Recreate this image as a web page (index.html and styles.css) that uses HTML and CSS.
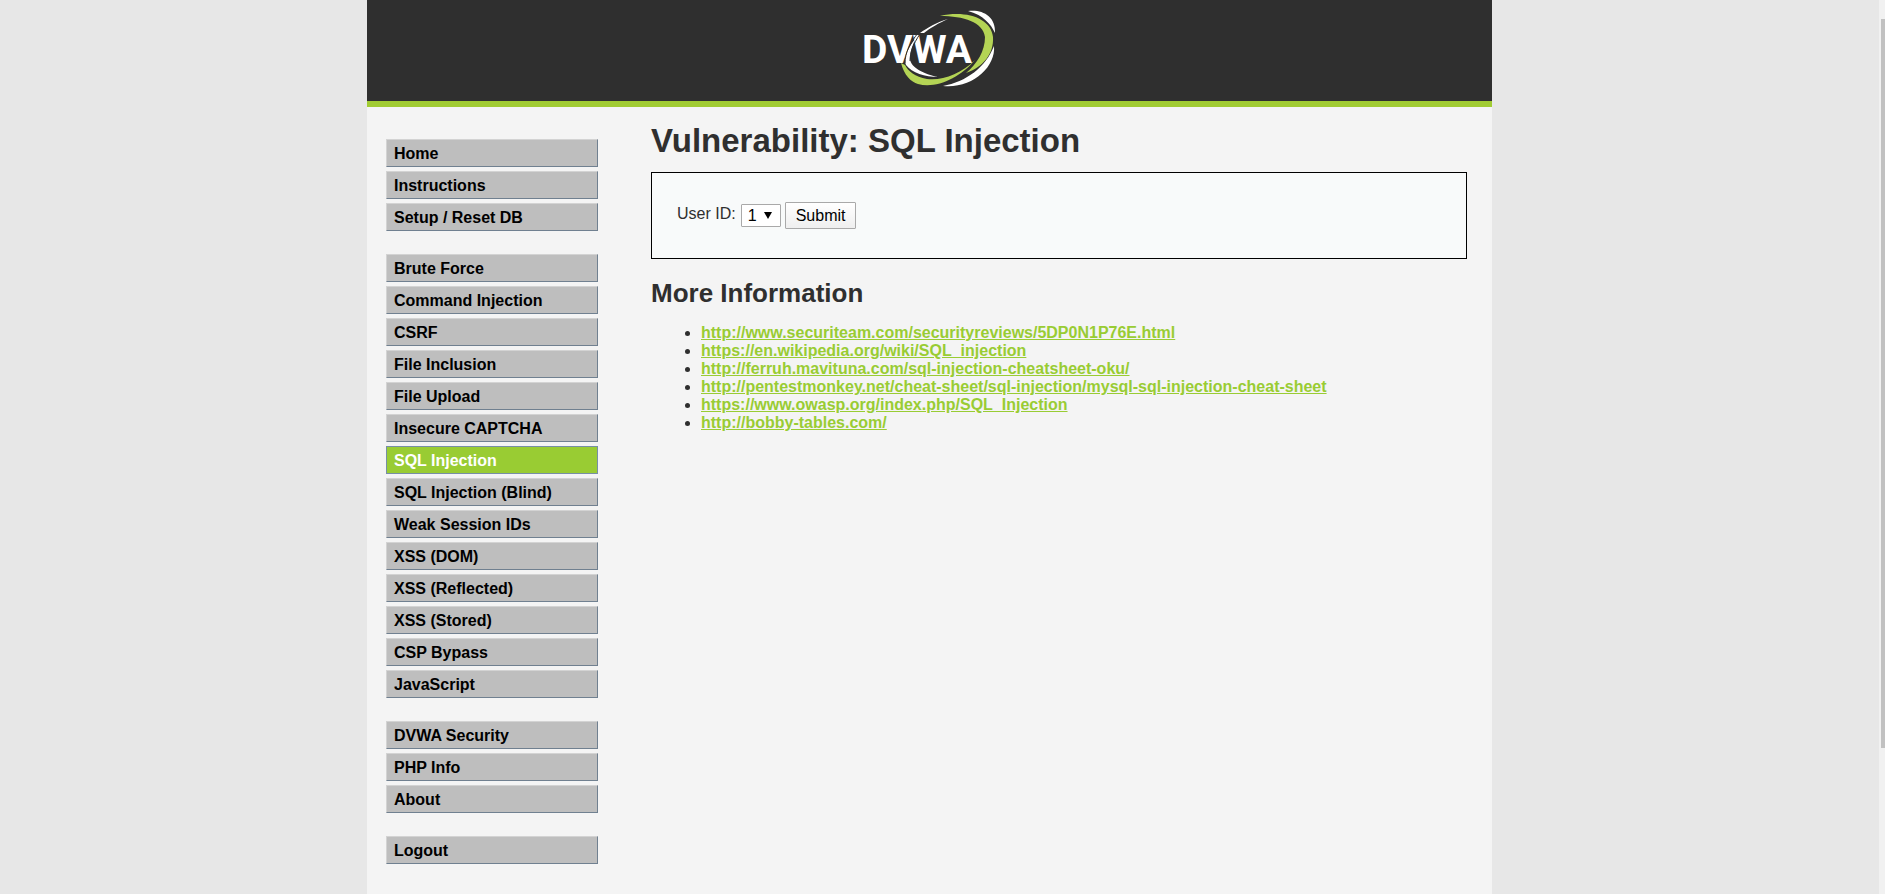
FILE: index.html
```html
<!DOCTYPE html>
<html lang="en">
<head>
  <meta charset="UTF-8">
  <meta name="viewport" content="width=device-width, initial-scale=1.0">
  <title>Vulnerability: SQL Injection</title>
  <link rel="stylesheet" href="styles.css">
</head>
<body>

  <div class="container">

    <header class="header">
      <svg class="logo" viewBox="0 0 131 75" role="img" aria-label="DVWA">
        <!-- right swooshes -->
        <path fill="#fff" d="M104 0 C118 -2 132 5 131 22 C127 13 119 4 104 0 Z"/>
        <path fill="#fff" d="M130 35 C132 56 108 78 79 75 C102 71 122 56 130 35 Z"/>
        <path fill="#b4d455" d="M76 5 C102 -1 127 7 129 26 C130 43 119 56 102 62 C113 53 121 40 121 26 C119 11 100 5 76 5 Z"/>
        <!-- bottom swoosh -->
        <path fill="#b4d455" d="M37 52 C40 64 47 71 54 73 C72 78 96 67 111 49 C97 63 78 70 63 68 C51 66 44 60 41 54 Z"/>
        <text class="logo-text" x="-2" y="52">DVWA</text>
        <!-- left swoosh, runs between the V and the W -->
        <path fill="#fff" d="M84 8 C73 11 63 17 56 22 L60 22 C66 17 75 12 84 8 Z"/>
        <path fill="#fff" d="M52 27 C44 36 39 48 42 54 C48 62 61 66 74 66 C60 63 47 57 46 48 C46 40 49 33 52 27 Z"/>
        <path fill="none" stroke="#2f2f2f" d="M54 22 C46 32 41 42 41 52 M56 23 C49 33 46 42 46 50"/>
      </svg>
    </header>

    <div class="page">

      <nav class="menu">
        <ul class="menu-block">
          <li><a href="#">Home</a></li>
          <li><a href="#">Instructions</a></li>
          <li><a href="#">Setup / Reset DB</a></li>
        </ul>
        <ul class="menu-block">
          <li><a href="#">Brute Force</a></li>
          <li><a href="#">Command Injection</a></li>
          <li><a href="#">CSRF</a></li>
          <li><a href="#">File Inclusion</a></li>
          <li><a href="#">File Upload</a></li>
          <li><a href="#">Insecure CAPTCHA</a></li>
          <li class="selected"><a href="#">SQL Injection</a></li>
          <li><a href="#">SQL Injection (Blind)</a></li>
          <li><a href="#">Weak Session IDs</a></li>
          <li><a href="#">XSS (DOM)</a></li>
          <li><a href="#">XSS (Reflected)</a></li>
          <li><a href="#">XSS (Stored)</a></li>
          <li><a href="#">CSP Bypass</a></li>
          <li><a href="#">JavaScript</a></li>
        </ul>
        <ul class="menu-block">
          <li><a href="#">DVWA Security</a></li>
          <li><a href="#">PHP Info</a></li>
          <li><a href="#">About</a></li>
        </ul>
        <ul class="menu-block">
          <li><a href="#">Logout</a></li>
        </ul>
      </nav>

      <main class="main-body">
        <h1>Vulnerability: SQL Injection</h1>

        <form class="code-area" action="#" method="post">
          <label for="id">User ID:</label>
          <span class="select-wrap">
            <select id="id" name="id">
              <option value="1">1</option>
              <option value="2">2</option>
              <option value="3">3</option>
              <option value="4">4</option>
              <option value="5">5</option>
            </select>
          </span>
          <button type="submit">Submit</button>
        </form>

        <h2>More Information</h2>
        <ul class="links">
          <li><a href="http://www.securiteam.com/securityreviews/5DP0N1P76E.html">http://www.securiteam.com/securityreviews/5DP0N1P76E.html</a></li>
          <li><a href="https://en.wikipedia.org/wiki/SQL_injection">https://en.wikipedia.org/wiki/SQL_injection</a></li>
          <li><a href="http://ferruh.mavituna.com/sql-injection-cheatsheet-oku/">http://ferruh.mavituna.com/sql-injection-cheatsheet-oku/</a></li>
          <li><a href="http://pentestmonkey.net/cheat-sheet/sql-injection/mysql-sql-injection-cheat-sheet">http://pentestmonkey.net/cheat-sheet/sql-injection/mysql-sql-injection-cheat-sheet</a></li>
          <li><a href="https://www.owasp.org/index.php/SQL_Injection">https://www.owasp.org/index.php/SQL_Injection</a></li>
          <li><a href="http://bobby-tables.com/">http://bobby-tables.com/</a></li>
        </ul>
      </main>

    </div>
  </div>

  <div class="scroll-track"><div class="scroll-thumb"></div></div>

</body>
</html>
```

FILE: styles.css
```css
* {
  box-sizing: border-box;
}

body {
  margin: 0;
  padding-right: 26px;
  background: #e7e7e7;
  color: #2f2f2f;
  font-family: Arial, "Liberation Sans", sans-serif;
  font-size: 16px;
  line-height: 18px;
}

.container {
  max-width: 1125px;
  min-height: 100vh;
  margin: 0 auto;
  background: #f4f4f4;
}

.header {
  display: flex;
  justify-content: center;
  padding: 11px 0 15px;
  background: #2f2f2f;
  border-bottom: 6px solid #a1cc33;
}

.logo {
  width: 131px;
  height: 75px;
  overflow: visible;
}

.logo-text {
  font-family: Roboto, sans-serif;
  font-size: 39px;
  font-weight: 700;
  fill: #fff;
}

.page {
  display: flex;
  gap: 53px;
  padding: 0 25px 29px 19px;
}

/* left menu */
.menu {
  flex: 0 0 212px;
  display: flex;
  flex-direction: column;
  gap: 23px;
  padding-top: 32px;
}

.menu-block {
  display: flex;
  flex-direction: column;
  gap: 4px;
  margin: 0;
  padding: 0;
  list-style: none;
}

.menu-block a {
  display: block;
  padding: 5px 7px 3px;
  background: #bebebe;
  border: 1px solid;
  border-color: #d3d3d3 #708090 #708090 #d3d3d3;
  color: #000;
  font-weight: bold;
  text-decoration: none;
}

.menu-block .selected a {
  background: #9c3;
  border-color: #778fa5;
  color: #fff;
}

/* content */
.main-body {
  flex: 1;
  min-width: 0;
}

h1 {
  margin: 14px 0 12px;
  font-size: 33px;
  line-height: 39px;
}

h2 {
  margin: 19px 0 16px;
  font-size: 26px;
  line-height: 30px;
}

.code-area {
  display: flex;
  align-items: center;
  gap: 4px;
  height: 87px;
  padding: 0 25px;
  background: #f8fafa;
  border: 1px solid #000;
}

.code-area label {
  padding: 0 1px 4px 0;
}

.select-wrap {
  position: relative;
  display: flex;
}

.select-wrap::after {
  content: "";
  position: absolute;
  top: 8px;
  right: 9px;
  border: 4px solid transparent;
  border-top: 7px solid #000;
  border-bottom: 0;
  pointer-events: none;
}

.code-area select {
  appearance: none;
  width: 40px;
  height: 23px;
  padding: 0 6px;
  background: #fff;
  border: 1px solid #a9a9a9;
  border-radius: 1px;
  font: inherit;
  color: #000;
}

.code-area button {
  height: 27px;
  padding: 0 10px;
  background: linear-gradient(#fff, #efefef);
  border: 1px solid #a9a9a9;
  border-radius: 1px;
  font: inherit;
  color: #000;
}

.links {
  margin: 0;
  padding-left: 50px;
}

.links a {
  color: #9c3;
  font-weight: bold;
}

/* scroll bar at the window edge */
.scroll-track {
  position: fixed;
  top: 0;
  right: 0;
  bottom: 0;
  display: flex;
  flex-direction: column;
  width: 6px;
  padding: 19px 0 0 2px;
  background: #f1f1f1;
}

.scroll-track::after {
  content: "";
  flex: 1;
}

.scroll-thumb {
  flex: 5;
  background: #c1c1c1;
}
```
